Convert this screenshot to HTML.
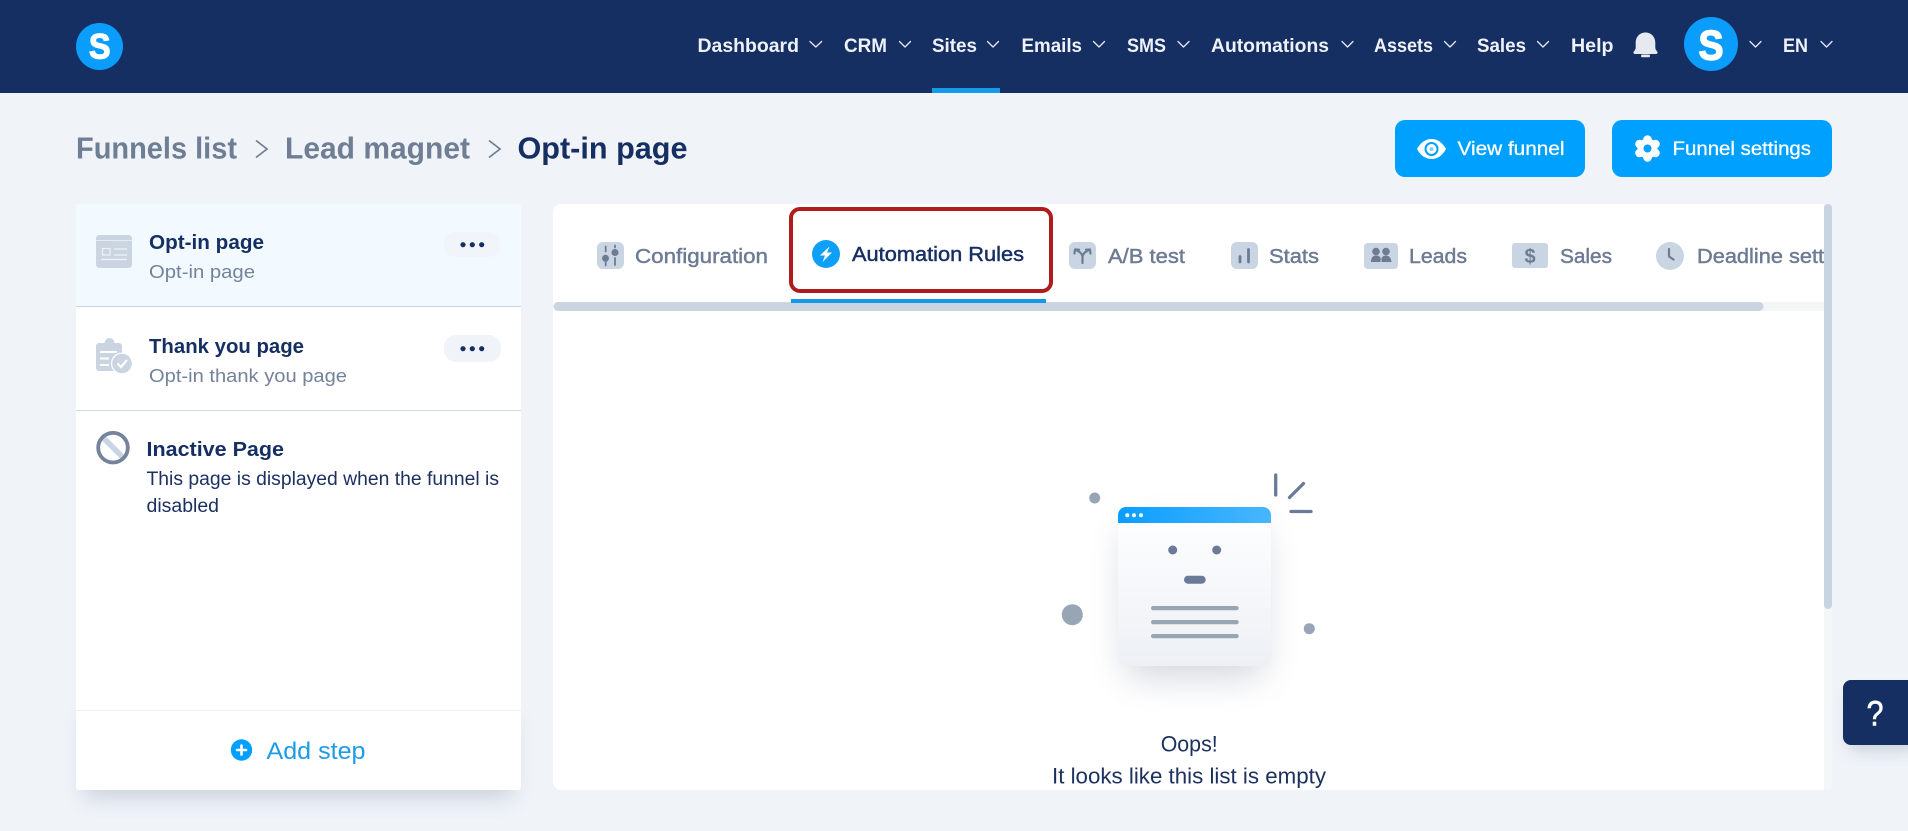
<!DOCTYPE html>
<html lang="en"><head><meta charset="utf-8"><title>Opt-in page</title>
<style>
html,body{margin:0;padding:0;background:#f0f4f9;width:1908px;height:831px;overflow:hidden}
svg{display:block}
text{font-family:"Liberation Sans",sans-serif}
.n{font-size:19.5px;font-weight:700;fill:#eef1f7}
.c{fill:none;stroke:#e6eaf2;stroke-width:1.3;stroke-linecap:round;stroke-linejoin:round}
.b{font-size:31px;font-weight:700;fill:#6f7e94}
.t{font-size:20px;fill:#6d7b93;stroke:#6d7b93;stroke-width:.45}
.i{fill:#c9d5e3}
.g{fill:#6d7b93}
.gs{fill:none;stroke:#6d7b93;stroke-width:2.2;stroke-linecap:round;stroke-linejoin:round}
.h{font-size:20.5px;font-weight:700;fill:#162f63}
.s{font-size:18.5px;fill:#74829a}
.d{font-size:19px;fill:#1d3161}
</style></head>
<body>
<svg width="1908" height="831" viewBox="0 0 1908 831" xmlns="http://www.w3.org/2000/svg">
<defs>
<filter id="sh1" x="-30%" y="-60%" width="160%" height="240%"><feGaussianBlur stdDeviation="11"/></filter>
<filter id="sh2" x="-50%" y="-50%" width="200%" height="200%"><feGaussianBlur stdDeviation="18"/></filter>
<filter id="sh3" x="-50%" y="-50%" width="200%" height="200%"><feGaussianBlur stdDeviation="8"/></filter>
<linearGradient id="hd" x1="0" x2="1" y1="0" y2="0"><stop offset="0" stop-color="#0a9eff"/><stop offset="1" stop-color="#48b6ff"/></linearGradient>
<linearGradient id="bd" x1="0" x2="0" y1="0" y2="1"><stop offset="0" stop-color="#ffffff"/><stop offset="1" stop-color="#edf0f5"/></linearGradient>
<clipPath id="tabclip"><rect x="553" y="204" width="1271" height="108"/></clipPath>
<clipPath id="mainclip"><rect x="553" y="204" width="1271" height="586"/></clipPath>
<clipPath id="cardclip"><rect x="1118" y="507" width="153" height="159" rx="8"/></clipPath>
</defs>

<rect width="1908" height="831" fill="#f0f4f9"/>

<!-- Header -->
<rect width="1908" height="93" fill="#162f63"/>
<rect x="932" y="88" width="68" height="5" fill="#159ae9"/>
<circle cx="99.5" cy="46.5" r="23.5" fill="#0b9dfb"/>
<text x="89" y="58.500" font-size="35" font-weight="700" fill="#fff" stroke="#fff" stroke-width="1.300" textLength="21.500" lengthAdjust="spacingAndGlyphs">S</text>

<text class="n" x="697.5" y="52" textLength="101.5" lengthAdjust="spacingAndGlyphs">Dashboard</text>
<polyline class="c" points="810,41.5 815.8,47 821.6,41.5"/>
<text class="n" x="844" y="52" textLength="43" lengthAdjust="spacingAndGlyphs">CRM</text>
<polyline class="c" points="899.5,41.5 905,47 910.5,41.5"/>
<text class="n" x="932" y="52" textLength="45" lengthAdjust="spacingAndGlyphs">Sites</text>
<polyline class="c" points="987.5,41.5 993,47 998.5,41.5"/>
<text class="n" x="1021.5" y="52" textLength="60.5" lengthAdjust="spacingAndGlyphs">Emails</text>
<polyline class="c" points="1093.5,41.5 1099,47 1104.5,41.5"/>
<text class="n" x="1127" y="52" textLength="39" lengthAdjust="spacingAndGlyphs">SMS</text>
<polyline class="c" points="1178,41.5 1183.5,47 1189,41.5"/>
<text class="n" x="1211" y="52" textLength="118" lengthAdjust="spacingAndGlyphs">Automations</text>
<polyline class="c" points="1342,41.5 1347.5,47 1353,41.5"/>
<text class="n" x="1374" y="52" textLength="59" lengthAdjust="spacingAndGlyphs">Assets</text>
<polyline class="c" points="1444.5,41.5 1450,47 1455.5,41.5"/>
<text class="n" x="1477" y="52" textLength="49" lengthAdjust="spacingAndGlyphs">Sales</text>
<polyline class="c" points="1537.5,41.5 1543,47 1548.5,41.5"/>
<text class="n" x="1571" y="52" textLength="42.5" lengthAdjust="spacingAndGlyphs">Help</text>

<!-- Bell -->
<path d="M1645.500 32.500c-6 0-9.800 4.500-9.800 10.500v4.500c0 1.800-1 3-2 4.200-.7 1 0 2.300 1.200 2.300h21.200c1.200 0 1.900-1.300 1.200-2.300-1-1.200-2-2.400-2-4.200v-4.500c0-6-3.800-10.500-9.800-10.500z" fill="#e6e9ef"/>
<rect x="1641" y="54.500" width="9" height="2.800" rx="1.200" fill="#e6e9ef"/>

<!-- Avatar -->
<circle cx="1711" cy="44" r="27" fill="#0b9dfb"/>
<text x="1698.500" y="59.500" font-size="42" font-weight="700" fill="#fff" stroke="#fff" stroke-width="1.500" textLength="25" lengthAdjust="spacingAndGlyphs">S</text>
<polyline class="c" points="1750,41.5 1755.5,47 1761,41.5"/>
<text class="n" x="1783" y="52" textLength="25" lengthAdjust="spacingAndGlyphs">EN</text>
<polyline class="c" points="1821,41.5 1826.5,47 1832,41.5"/>

<!-- Breadcrumb -->
<text class="b" x="76" y="158.500" textLength="161" lengthAdjust="spacingAndGlyphs">Funnels list</text>
<polyline points="256,140.5 267,149 256,157.5" fill="none" stroke="#6f7e94" stroke-width="1.700"/>
<text class="b" x="285" y="158.500" textLength="185" lengthAdjust="spacingAndGlyphs">Lead magnet</text>
<polyline points="489,140.5 500,149 489,157.5" fill="none" stroke="#6f7e94" stroke-width="1.700"/>
<text class="b" x="517.500" y="158.500" textLength="170" lengthAdjust="spacingAndGlyphs" style="fill:#162f63">Opt-in page</text>

<!-- Buttons -->
<rect x="1395" y="120" width="190" height="57" rx="10" fill="#00a0ff"/>
<path d="M1417 149c3.500-6.500 8.500-10 14.500-10s11 3.500 14.500 10c-3.500 6.500-8.500 10-14.500 10s-11-3.500-14.500-10z" fill="#fff"/>
<circle cx="1431.500" cy="149" r="7" fill="#00a0ff"/>
<circle cx="1431.500" cy="149" r="5" fill="#fff"/>
<circle cx="1431.500" cy="149" r="2" fill="#00a0ff" opacity=".5"/>
<text x="1457.500" y="155" font-size="19.500" fill="#fff" stroke="#fff" stroke-width=".3" textLength="107" lengthAdjust="spacingAndGlyphs">View funnel</text>

<rect x="1612" y="120" width="220" height="57" rx="10" fill="#00a0ff"/>
<g transform="translate(1647.500 148.500)" fill="#fff">
<circle r="10"/>
<circle cx="0" cy="-9" r="4.300"/>
<circle cx="8" cy="-4.500" r="4.300"/>
<circle cx="8" cy="4.500" r="4.300"/>
<circle cx="0" cy="9" r="4.300"/>
<circle cx="-8" cy="4.500" r="4.300"/>
<circle cx="-8" cy="-4.500" r="4.300"/>
<circle r="4" fill="#00a0ff"/>
</g>
<text x="1672.500" y="155" font-size="19.500" fill="#fff" stroke="#fff" stroke-width=".3" textLength="138.500" lengthAdjust="spacingAndGlyphs">Funnel settings</text>

<!-- Left panel -->
<rect x="84" y="716" width="429" height="82" fill="#4a5a75" opacity=".22" filter="url(#sh1)"/>
<rect x="76" y="204" width="445" height="586" rx="3" fill="#fff"/>
<path d="M76 207a3 3 0 0 1 3-3h439a3 3 0 0 1 3 3v99H76z" fill="#f3faff"/>
<rect x="76" y="306" width="445" height="1" fill="#c9d5e3"/>
<rect x="76" y="410" width="445" height="1" fill="#d5dae2"/>
<rect x="76" y="710" width="445" height="1" fill="#eef0f3"/>

<!-- Step 1 -->
<rect x="96" y="235" width="36" height="33" rx="3.500" fill="#cbd5e2"/>
<rect x="96" y="240" width="36" height="1" fill="#e6ecf3"/>
<rect x="102.500" y="248.500" width="7.500" height="6.500" fill="none" stroke="#eef2f7" stroke-width="1.200"/>
<path d="M114 249h13M114 255h13M101 259.500h26" stroke="#eef2f7" stroke-width="1.300" fill="none"/>
<text class="h" x="149" y="249" textLength="115" lengthAdjust="spacingAndGlyphs">Opt-in page</text>
<text class="s" x="149" y="278" textLength="106" lengthAdjust="spacingAndGlyphs">Opt-in page</text>
<rect x="444" y="232" width="57" height="25" rx="11" fill="#f1f5fa"/>
<circle cx="463" cy="244.700" r="2.600" fill="#162f63"/><circle cx="472.300" cy="244.700" r="2.600" fill="#162f63"/><circle cx="481.700" cy="244.700" r="2.600" fill="#162f63"/>

<!-- Step 2 -->
<path d="M100 343h4.500a5 5 0 0 1 10 0h4.500a3 3 0 0 1 3 3v22a3 3 0 0 1-3 3h-20a3 3 0 0 1-3-3v-22a3 3 0 0 1 3-3z" fill="#cbd5e2"/>
<path d="M100 352h17M100 358.500h9M100 365h9" stroke="#fff" stroke-width="2" fill="none"/>
<circle cx="122" cy="363.500" r="11" fill="#fff"/>
<circle cx="122" cy="363.500" r="9.800" fill="#cbd5e2"/>
<polyline points="117.500,363.500 121,367 127,360" fill="none" stroke="#fff" stroke-width="2.200"/>
<text class="h" x="149" y="353" textLength="155" lengthAdjust="spacingAndGlyphs">Thank you page</text>
<text class="s" x="149" y="382" textLength="198" lengthAdjust="spacingAndGlyphs">Opt-in thank you page</text>
<rect x="444" y="335" width="57" height="27" rx="12" fill="#f0f4f9"/>
<circle cx="463" cy="348.700" r="2.600" fill="#162f63"/><circle cx="472.300" cy="348.700" r="2.600" fill="#162f63"/><circle cx="481.700" cy="348.700" r="2.600" fill="#162f63"/>

<!-- Inactive -->
<line x1="103" y1="437.500" x2="123" y2="457.500" stroke="#c9d5e3" stroke-width="5.500"/>
<circle cx="113" cy="447.700" r="14.800" fill="none" stroke="#75839b" stroke-width="3.800"/>
<text class="h" x="146.500" y="456" textLength="137.500" lengthAdjust="spacingAndGlyphs">Inactive Page</text>
<text class="d" x="146.500" y="485" textLength="352.500" lengthAdjust="spacingAndGlyphs">This page is displayed when the funnel is</text>
<text class="d" x="146.500" y="512" textLength="72.500" lengthAdjust="spacingAndGlyphs">disabled</text>

<!-- Add step -->
<circle cx="241.500" cy="750" r="10.700" fill="#00a0ff"/>
<path d="M237 750h9M241.500 745.500v9" stroke="#fff" stroke-width="2.600" stroke-linecap="round"/>
<text x="266.500" y="759" font-size="24" fill="#1e9be8" textLength="99" lengthAdjust="spacingAndGlyphs">Add step</text>

<!-- Main panel -->
<path d="M561 204H1824V790H561a8 8 0 0 1-8-8V212a8 8 0 0 1 8-8z" fill="#fff"/>
<rect x="1824" y="204" width="8" height="586" rx="4" fill="#f5f6f8"/>
<rect x="1824" y="204" width="8" height="405" rx="4" fill="#c8d4e2"/>

<!-- Tabs -->
<g clip-path="url(#tabclip)">
<rect x="1740" y="302" width="90" height="9" rx="4" fill="#f4f5f7"/>
<path d="M558 302H1759a4.500 4.500 0 0 1 0 9H558a4.500 4.500 0 0 1 0-9z" fill="#cbd5e1"/>
<rect x="791" y="299" width="255" height="4" fill="#159ae9"/>

<rect x="597" y="242" width="27" height="27" rx="6" class="i"/>
<path d="M605.700 246.500v5M605.700 262v3.500M615 245.500v2M615 258v7" stroke="#6d7b93" stroke-width="1.800" stroke-linecap="round"/>
<circle cx="605.500" cy="258.300" r="3.500" class="g"/><circle cx="615" cy="252.500" r="3.500" class="g"/>
<text class="t" x="635" y="263" textLength="133" lengthAdjust="spacingAndGlyphs">Configuration</text>

<circle cx="826" cy="254" r="14" fill="#0ea0f8"/>
<path d="M829.500 246.500 820 255.500h5l-2.500 6.500 9.500-9.500h-5z" fill="#fff"/>
<text x="852" y="261" font-size="20" fill="#162f63" stroke="#162f63" stroke-width=".45" textLength="172" lengthAdjust="spacingAndGlyphs">Automation Rules</text>

<rect x="1069" y="242" width="27" height="27" rx="6" class="i"/>
<path class="gs" d="M1082.500 263v-6.500M1082.500 256.500c-.5-3-3-5-6.500-6.500M1082.500 256.500c.5-3 3-5 6.500-6.500M1074.500 253.500l.5-4 4 .2M1090.500 253.500l-.5-4-4 .2"/>
<text class="t" x="1108" y="263" textLength="77" lengthAdjust="spacingAndGlyphs">A/B test</text>

<rect x="1231" y="242" width="27" height="27" rx="6" class="i"/>
<path d="M1240 256.500v5.500M1248.500 249.500v12.500" stroke="#6d7b93" stroke-width="2.800" stroke-linecap="round"/>
<text class="t" x="1269" y="263" textLength="50" lengthAdjust="spacingAndGlyphs">Stats</text>

<rect x="1364" y="243" width="34" height="26" rx="4" class="i"/>
<circle cx="1376" cy="251.500" r="3.800" class="g"/><circle cx="1386" cy="251.500" r="3.800" class="g"/>
<path d="M1371 262c0-4.500 2-6.500 5-6.500s4.500 1.500 4.800 3.500l-.5 3zM1381.500 262v-3c.3-2 1.700-3.500 4.500-3.500 3 0 5 2 5.500 6.500z" class="g"/>
<text class="t" x="1409" y="263" textLength="58" lengthAdjust="spacingAndGlyphs">Leads</text>

<rect x="1512" y="243" width="36" height="25" rx="3" class="i"/>
<text x="1530" y="263" font-size="20" font-weight="700" text-anchor="middle" fill="#6d7b93">$</text>
<text class="t" x="1560" y="263" textLength="52" lengthAdjust="spacingAndGlyphs">Sales</text>

<circle cx="1670" cy="256" r="14" class="i"/>
<path class="gs" d="M1669 249v7.500l4.500 3"/>
<text class="t" x="1697" y="263" textLength="167" lengthAdjust="spacingAndGlyphs">Deadline settings</text>
</g>

<!-- Red annotation -->
<rect x="791" y="209" width="260" height="82" rx="9" fill="none" stroke="#b01c1e" stroke-width="4"/>

<!-- Illustration -->
<g clip-path="url(#mainclip)">
<rect x="1126" y="530" width="137" height="146" rx="12" fill="#4a5a75" opacity=".26" filter="url(#sh2)"/>
<rect x="1118" y="507" width="153" height="159" rx="8" fill="url(#bd)"/>
<g clip-path="url(#cardclip)"><rect x="1118" y="507" width="153" height="16" fill="url(#hd)"/></g>
<circle cx="1127.300" cy="515.300" r="2" fill="#fff"/><circle cx="1134" cy="515.300" r="2" fill="#fff"/><circle cx="1141" cy="515.300" r="2" fill="#fff"/>
<circle cx="1172.700" cy="550" r="4.500" fill="#6b7a96"/><circle cx="1216.700" cy="550" r="4.500" fill="#6b7a96"/>
<rect x="1184" y="575.700" width="21.700" height="8" rx="4" fill="#6b7a96"/>
<rect x="1151" y="606" width="87.700" height="4.300" rx="2.100" fill="#98a5b5"/>
<rect x="1151" y="620" width="87.700" height="4.300" rx="2.100" fill="#98a5b5"/>
<rect x="1151" y="634" width="87.700" height="4.300" rx="2.100" fill="#98a5b5"/>
<circle cx="1094.700" cy="498" r="5.500" fill="#98a5b5"/>
<circle cx="1072.300" cy="614.700" r="10.500" fill="#98a5b5"/>
<circle cx="1309.300" cy="628.700" r="5.500" fill="#98a5b5"/>
<path d="M1275.700 475v20M1289.500 497.500 1303.500 483.500M1291 511.500h20" stroke="#6b7a96" stroke-width="3.300" stroke-linecap="round" fill="none"/>
<text x="1160.700" y="751.700" font-size="22" fill="#1d3161" textLength="57" lengthAdjust="spacingAndGlyphs">Oops!</text>
<text x="1052" y="783.700" font-size="22" fill="#1d3161" textLength="274" lengthAdjust="spacingAndGlyphs">It looks like this list is empty</text>
</g>

<!-- Help -->
<rect x="1848" y="692" width="70" height="60" rx="8" fill="#4a5a75" opacity=".2" filter="url(#sh3)"/>
<path d="M1851 680H1908V745H1851a8 8 0 0 1-8-8V688a8 8 0 0 1 8-8z" fill="#162f63"/>
<text x="1866.500" y="725.500" font-size="35" fill="#fff" stroke="#fff" stroke-width=".6" textLength="17" lengthAdjust="spacingAndGlyphs">?</text>
</svg>
</body></html>
